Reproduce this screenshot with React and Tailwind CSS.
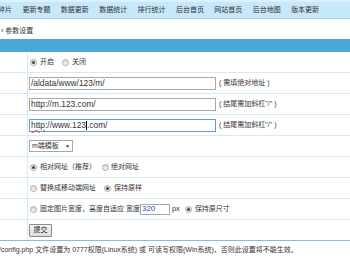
const font = "font-['Liberation_Sans','Noto_Sans_CJK_SC',sans-serif]";

const navItems = ["碎片", "更新专题", "数据更新", "数据统计", "排行统计", "后台首页", "网站首页", "后台地图", "版本更新"];

function Radio({ checked }) {
  return (
    <span className="inline-flex w-[7px] h-[7px] shrink-0 items-center justify-center rounded-full border border-[#aaaaaa] bg-gradient-to-b from-[#d6d6d6] to-[#f8f8f8]">
      {checked && <span className="w-[3px] h-[3px] rounded-full bg-[#444]" />}
    </span>
  );
}

function Row({ children, last }) {
  return (
    <div className={`flex h-[21px] border-b ${last ? "border-[#7cc0e6]" : "border-[#d4ecf9]"}`}>
      <div className="w-[28px] shrink-0 border-r border-[#d4ecf9]" />
      <div className="flex items-center pl-[1px] text-[7px] leading-[10px] text-[#333]">{children}</div>
    </div>
  );
}

function TextBox({ children, focused }) {
  return (
    <div
      className={`flex items-center w-[187px] h-[13px] px-[1px] border text-[8.4px] leading-[11px] text-[#333] bg-white ${
        focused ? "border-[#5f9cd8]" : "border-[#a8a8a8]"
      }`}
    >
      {children}
    </div>
  );
}

const App = () => {
  return (
    <div className={`w-[350px] h-[280px] overflow-hidden bg-white ${font}`}>
      <div className="flex items-center h-[19px] gap-[10.4px] pl-[-2px] border-t-[2px] border-t-[#ddf1fc] border-b border-b-[#a9d8f2] bg-[#c7e8fa] text-[7px] text-[#333] whitespace-nowrap">
        {navItems.map((item, i) => (
          <span key={item} className={i === 0 ? "ml-[-2px]" : ""}>
            {item}
          </span>
        ))}
      </div>
      <div className="flex items-center h-[20px] pt-[4px] text-[7px] text-[#333]">
        <span className="ml-[1px] mr-[2px] text-[7px]">›</span>
        <span>参数设置</span>
      </div>
      <div className="h-[13px] bg-[#4aa9d9]" />

      <Row>
        <span className="ml-[1px]" />
        <Radio checked />
        <span className="ml-[3px]">开启</span>
        <span className="ml-[8px]" />
        <Radio />
        <span className="ml-[3px]">关闭</span>
      </Row>
      <Row>
        <TextBox>/aldata/www/123/m/</TextBox>
        <span className="ml-[3px]">( 需填绝对地址 )</span>
      </Row>
      <Row>
        <TextBox>http://m.123.com/</TextBox>
        <span className="ml-[3px]">( 结尾需加斜杠"/" )</span>
      </Row>
      <Row>
        <TextBox focused>
          <span className="underline decoration-wavy decoration-[#e23b3b] decoration-1 underline-offset-[1px]">http</span>
          <span>://www.123</span>
          <span className="inline-block w-px h-[9px] bg-black" />
          <span>.com/</span>
        </TextBox>
        <span className="ml-[3px]">( 结尾需加斜杠"/" )</span>
      </Row>
      <Row>
        <div className="flex items-center justify-between w-[44px] h-[12px] px-[2px] border border-[#a8a8a8] bg-white">
          <span>m端模板</span>
          <span className="text-[5px]">▼</span>
        </div>
      </Row>
      <Row>
        <span className="ml-[1px]" />
        <Radio checked />
        <span className="ml-[3px]">相对网址（推荐）</span>
        <span className="ml-[6px]" />
        <Radio />
        <span className="ml-[2px]">绝对网址</span>
      </Row>
      <Row>
        <span className="ml-[1px]" />
        <Radio />
        <span className="ml-[3px]">替换成移动端网址</span>
        <span className="ml-[8px]" />
        <Radio checked />
        <span className="ml-[3px]">保持原样</span>
      </Row>
      <Row>
        <span className="ml-[1px]" />
        <Radio />
        <span className="ml-[3px]">固定图片宽度，高度自适应 宽度</span>
        <div className="flex items-center w-[30px] h-[11px] px-[1px] border border-[#a8a8a8] text-[8px] text-[#3146b5] bg-white">
          320
        </div>
        <span className="ml-[2px] text-[7.5px]">px</span>
        <span className="ml-[5px]" />
        <Radio checked />
        <span className="ml-[3px]">保持原尺寸</span>
      </Row>
      <Row last>
        <div className="flex items-center justify-center w-[23px] h-[13px] border border-[#8a8a8a] rounded-[1px] bg-gradient-to-b from-[#f7f7f7] to-[#dcdcdc] text-[7px] text-[#222]">
          提交
        </div>
      </Row>

      <div className="pt-[4px] ml-[-1px] text-[7px] leading-[10px] text-[#333] whitespace-nowrap">
        /config.php 文件设置为 0777权限(Linux系统) 或 可读写权限(Win系统)，否则此设置将不能生效。
      </div>
    </div>
  );
};

export default App;
